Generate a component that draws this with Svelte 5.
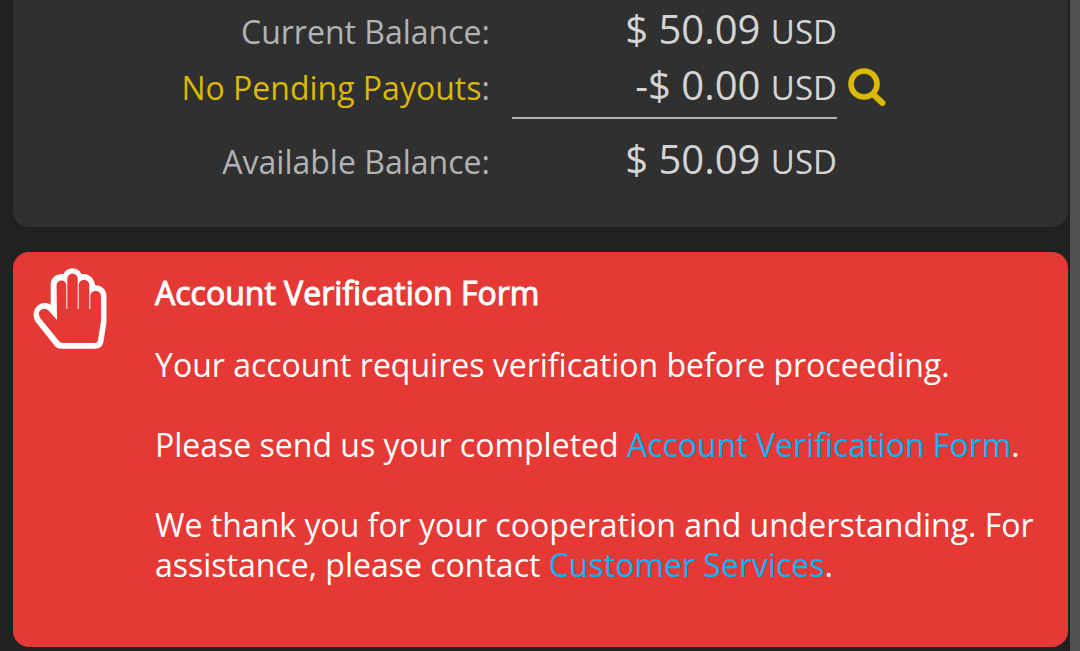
<script lang="ts">
  const rows = [
    { label: 'Current Balance', amount: '$ 50.09', pending: false },
    { label: 'No Pending Payouts', amount: '-$ 0.00', pending: true },
    { label: 'Available Balance', amount: '$ 50.09', pending: false }
  ];
</script>

<div class="page">
  <main>
    <section class="card balances">
      <table>
        <tbody>
          {#each rows as row}
            <tr class:pending={row.pending}>
              <th scope="row">
                {#if row.pending}<a href="#payouts">{row.label}</a>{:else}{row.label}{/if}:
              </th>
              <td class="value">
                <div class="amount">{row.amount} <small>USD</small></div>
              </td>
              <td class="action">
                {#if row.pending}
                  <button type="button" aria-label="View payouts">
                    <svg viewBox="0 0 40 40" width="40" height="40" fill="none" stroke="currentColor" stroke-linecap="round">
                      <circle cx="16" cy="16" r="13" stroke-width="5.6" />
                      <path d="M26 27 34.500 35" stroke-width="6" />
                    </svg>
                  </button>
                {/if}
              </td>
            </tr>
          {/each}
        </tbody>
      </table>
    </section>

    <section class="card notice">
      <svg class="hand" viewBox="33 267 76 84" width="76" height="84" fill="#fff" fill-rule="evenodd" aria-hidden="true">
        <path
          d="M50.700 305V285C50.700 277 57 273.500 63.500 274.200C66 266.500 79 266.500 81.500 274.200C88 272.500 94.500 278 95 285.200C101.500 285 106.500 289.500 106.500 296V322L103.500 341.500Q102.300 348.700 95 348.700H61.500Q57 348.700 54.500 345.500L35.500 321.500C30.500 313 36 303.500 44 303C47 302.900 49 303.500 50.700 305Z
             M57 320 56.600 285A4.900 5.300 0 0 1 66.300 285V309H67.300V279A5.200 5.500 0 0 1 77.700 279V309H78.700V285A5.300 5.300 0 0 1 89.300 285V309H90.300V296A5.300 5.300 0 0 1 101 296V321L98 340Q97.500 343 94.500 343H63Q60.500 343 58.500 340.500L41 319C39 316 38.500 314 39 312.500C40.500 308.500 46 307.500 49 311Z"
        />
      </svg>
      <div class="message">
        <h2>Account Verification Form</h2>
        <p>Your account requires verification before proceeding.</p>
        <p>Please send us your completed <a href="#form">Account Verification Form</a>.</p>
        <p>We thank you for your cooperation and understanding. For assistance, please contact <a href="#support">Customer Services</a>.</p>
      </div>
    </section>
  </main>
  <div class="scroll" aria-hidden="true"></div>
</div>

<style>
  :global(body) {
    margin: 0;
    background: #212121;
  }
  .page {
    display: flex;
    min-height: 100vh;
    font: 32px/40px "Open Sans", sans-serif;
    color: #fff;
  }
  main {
    flex: 1;
    min-width: 0;
    padding: 0 2px 4px 13px;
  }
  .scroll {
    width: 10px;
    background: #515151;
  }
  .card {
    box-sizing: border-box;
    border-radius: 16px;
  }
  .balances {
    padding: 1px 0 40px;
    margin-bottom: 25px;
    border-radius: 0 0 16px 16px;
    background: #303030;
    color: #b3b3b3;
  }
  table {
    width: 100%;
    table-layout: fixed;
    border-collapse: collapse;
  }
  th,
  td {
    height: 56px;
    padding: 0;
    vertical-align: baseline;
    text-align: right;
    font-weight: 400;
  }
  th {
    width: 45.2%;
    white-space: nowrap;
  }
  .value {
    width: 32.9%;
  }
  .amount {
    box-sizing: border-box;
    margin-left: 22px;
    font-size: 40px;
    line-height: 56px;
    color: #d4d4d4;
    white-space: nowrap;
  }
  small {
    font-size: 33px;
    line-height: 1;
  }
  .pending .amount {
    height: 62px;
    border-bottom: 2px solid #b3b3b3;
  }
  .pending th,
  .pending td {
    height: 74px;
  }
  a {
    color: #03b4fc;
    text-decoration: none;
  }
  .pending a {
    color: #dbb900;
  }
  td.action {
    vertical-align: top;
    text-align: left;
  }
  button {
    display: block;
    margin: 11px 0 0 11px;
    padding: 0;
    border: 0;
    background: none;
    color: #dbb900;
    cursor: pointer;
  }
  button svg {
    display: block;
  }
  .notice {
    display: flex;
    gap: 46px;
    padding: 15px 24px 62px 20px;
    background: #e53935;
  }
  .hand {
    flex: none;
  }
  .message {
    flex: 1;
    min-width: 0;
    padding-top: 6px;
  }
  h2 {
    margin: 0 0 32px;
    font-size: 32px;
    font-weight: 400;
    line-height: 40px;
    -webkit-text-stroke: 1px currentColor;
  }
  p {
    margin: 0 0 40px;
  }
  p:last-child {
    margin: 0;
  }
</style>
